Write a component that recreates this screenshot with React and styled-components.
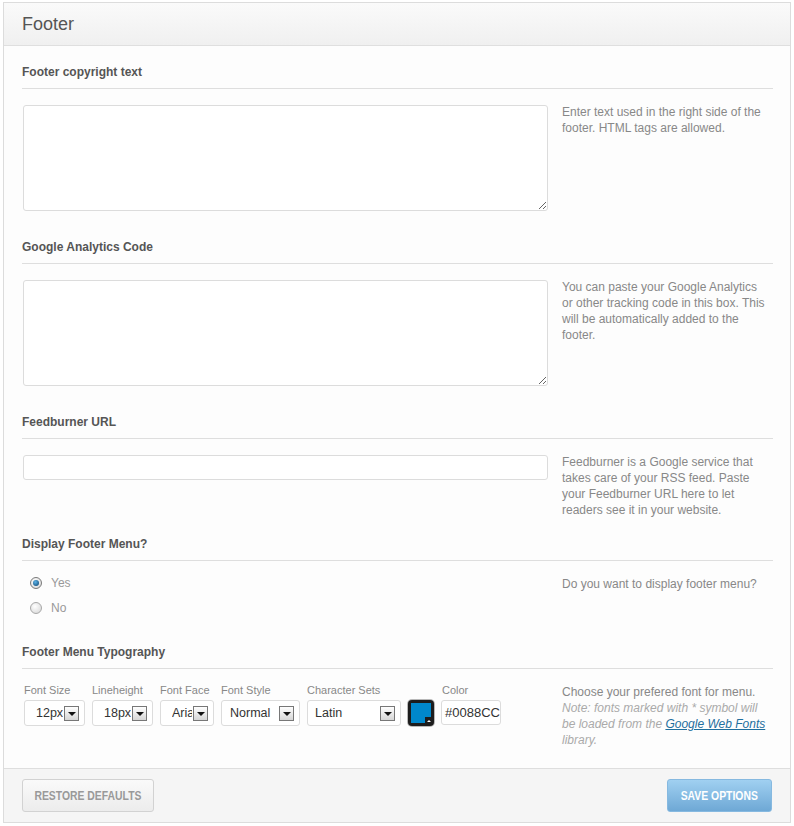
import React from "react";
import styled, { createGlobalStyle } from "styled-components";

const Global = createGlobalStyle`
  * { box-sizing: border-box; }
  html, body { margin: 0; padding: 0; background: #fff; }
  body { font-family: "Liberation Sans", Arial, sans-serif; }
`;

const Page = styled.div`
  padding: 2px 3px 3px 3px;
`;

const Panel = styled.div`
  border: 1px solid #dcdcdc;
  background: #fdfdfd;
`;

const Header = styled.div`
  height: 43px;
  display: flex;
  align-items: center;
  padding: 0 18px;
  background: linear-gradient(#fafafa, #f0f0f0);
  border-bottom: 1px solid #dfdfdf;
`;

const Title = styled.h2`
  margin: 0;
  font-size: 18px;
  font-weight: normal;
  color: #555;
`;

const Body = styled.div`
  padding: 17px 17px 3px 18px;
`;

const Section = styled.section`
  padding-bottom: 18px;
`;

const Heading = styled.h3`
  margin: 0 0 14px 0;
  font-size: 12px;
  line-height: 18px;
  font-weight: bold;
  color: #555;
  padding-bottom: 7px;
  border-bottom: 1px solid #dedede;
`;

const Row = styled.div`
  display: grid;
  grid-template-columns: 526px 207px;
  column-gap: 14px;
  align-items: start;
`;

const Desc = styled.div`
  font-size: 12px;
  line-height: 16px;
  color: #888;
  margin: 1px 0 -1px 0;
`;

const Note = styled.em`
  color: #aaa;
`;

const Link = styled.a`
  color: #1f6f9e;
  text-decoration: underline;
`;

const TextArea = styled.textarea`
  display: block;
  width: 525px;
  height: 106px;
  margin: 2px 0 9px 1px;
  border: 1px solid #dcdcdc;
  border-radius: 3px;
  background: #fff;
  resize: vertical;
  font-family: "Liberation Sans", Arial, sans-serif;
`;

const TextInput = styled.input`
  display: block;
  width: 525px;
  height: 25px;
  margin: 2px 0 0 1px;
  border: 1px solid #dcdcdc;
  border-radius: 3px;
  background: #fff;
`;

const RadioList = styled.div`
  display: flex;
  flex-direction: column;
  gap: 7px;
  margin: -1px 0 8px 8px;
`;

const RadioRow = styled.label`
  display: flex;
  align-items: center;
  gap: 9px;
  font-size: 12px;
  line-height: 18px;
  color: #999;
`;

const RadioDot = styled.span`
  width: 12px;
  height: 12px;
  border-radius: 50%;
  border: 1px solid ${(p) => (p.$checked ? "#7a7a7a" : "#a8a8a8")};
  background: radial-gradient(circle at 40% 35%, #ffffff, #d4d4d4);
  display: flex;
  align-items: center;
  justify-content: center;
  &::after {
    content: "";
    width: 6px;
    height: 6px;
    border-radius: 50%;
    display: ${(p) => (p.$checked ? "block" : "none")};
    background: radial-gradient(circle at 40% 35%, #5bb3e8, #0a3f6b);
  }
`;

const Fields = styled.div`
  display: flex;
  gap: 7px;
  align-items: flex-start;
  padding-left: 2px;
`;

const Field = styled.div`
  display: flex;
  flex-direction: column;
  gap: 3px;
`;

const FieldLabel = styled.span`
  font-size: 11px;
  line-height: 14px;
  height: 14px;
  color: #888;
  padding-left: ${(p) => p.$pad || 0}px;
`;

const SelectBox = styled.div`
  width: ${(p) => p.$w}px;
  height: 26px;
  display: flex;
  align-items: center;
  gap: 1px;
  padding: 0 5px 0 ${(p) => p.$pad}px;
  border: 1px solid #dcdcdc;
  border-radius: 3px;
  background: #fff;
`;

const SelectText = styled.span`
  flex: 1;
  min-width: 0;
  overflow: hidden;
  white-space: nowrap;
  font-size: 12.5px;
  color: #333;
`;

const Arrow = styled.span`
  flex: none;
  width: 15px;
  height: 15px;
  border: 1px solid #777;
  background: linear-gradient(#fefefe, #d6d6d6);
  display: flex;
  align-items: center;
  justify-content: center;
  &::after {
    content: "";
    margin-top: 2px;
    border-left: 4px solid transparent;
    border-right: 4px solid transparent;
    border-top: 4px solid #111;
  }
`;

const Swatch = styled.div`
  position: relative;
  width: 26px;
  height: 26px;
  padding: 3px;
  border-radius: 4px;
  background: #1d1d1d;
  box-shadow: 0 0 0 1px #b8b8b8;
`;

const SwatchColor = styled.div`
  width: 20px;
  height: 20px;
  background: #0088cc;
`;

const SwatchNotch = styled.span`
  position: absolute;
  right: 3px;
  bottom: 3px;
  width: 6px;
  height: 6px;
  background: #1d1d1d;
  display: flex;
  align-items: flex-end;
  justify-content: flex-end;
  &::after {
    content: "";
    border-left: 2px solid transparent;
    border-right: 2px solid transparent;
    border-bottom: 2px solid #fff;
    margin: 0 0 1px 0;
  }
`;

const ColorInput = styled.div`
  width: 60px;
  height: 25px;
  display: flex;
  align-items: center;
  padding-left: 3px;
  border: 1px solid #dcdcdc;
  border-radius: 3px;
  background: #fff;
  overflow: hidden;
  white-space: nowrap;
  font-size: 13px;
  color: #333;
`;

const FooterBar = styled.div`
  display: flex;
  justify-content: space-between;
  align-items: center;
  padding: 10px 18px;
  background: #f5f5f5;
  border-top: 1px solid #dedede;
`;

const Button = styled.button`
  height: 33px;
  width: ${(p) => p.$w}px;
  padding: 0;
  display: flex;
  align-items: center;
  justify-content: center;
  border-radius: 3px;
  cursor: pointer;
  border: 1px solid ${(p) => (p.$primary ? "#86b9e0" : "#d2d2d2")};
  color: ${(p) => (p.$primary ? "#fff" : "#999")};
  background: ${(p) =>
    p.$primary
      ? "linear-gradient(#a0d0f1, #6ea8d5)"
      : "linear-gradient(#fafafa, #ececec)"};
`;

const ButtonLabel = styled.span`
  display: inline-block;
  white-space: nowrap;
  font-family: "Liberation Sans", Arial, sans-serif;
  font-weight: bold;
  font-size: 13px;
  text-transform: uppercase;
  transform: scaleX(0.8);
`;

const selects = [
  { label: "Font Size", value: "12px", w: 61, pad: 11 },
  { label: "Lineheight", value: "18px", w: 61, pad: 11 },
  { label: "Font Face", value: "Arial", w: 54, pad: 11 },
  { label: "Font Style", value: "Normal", w: 79, pad: 8 },
  { label: "Character Sets", value: "Latin", w: 94, pad: 7 },
];

export default function App() {
  return (
    <>
      <Global />
      <Page>
        <Panel>
          <Header>
            <Title>Footer</Title>
          </Header>
          <Body>
            <Section>
              <Heading>Footer copyright text</Heading>
              <Row>
                <TextArea />
                <Desc>Enter text used in the right side of the footer. HTML tags are allowed.</Desc>
              </Row>
            </Section>
            <Section>
              <Heading>Google Analytics Code</Heading>
              <Row>
                <TextArea />
                <Desc>
                  You can paste your Google Analytics or other tracking code in this box. This will be automatically added to the footer.
                </Desc>
              </Row>
            </Section>
            <Section>
              <Heading>Feedburner URL</Heading>
              <Row>
                <TextInput type="text" />
                <Desc>
                  Feedburner is a Google service that takes care of your RSS feed. Paste your Feedburner URL here to let readers see it in your website.
                </Desc>
              </Row>
            </Section>
            <Section>
              <Heading>Display Footer Menu?</Heading>
              <Row>
                <RadioList>
                  <RadioRow>
                    <RadioDot $checked />
                    Yes
                  </RadioRow>
                  <RadioRow>
                    <RadioDot />
                    No
                  </RadioRow>
                </RadioList>
                <Desc>Do you want to display footer menu?</Desc>
              </Row>
            </Section>
            <Section>
              <Heading>Footer Menu Typography</Heading>
              <Row>
                <Fields>
                  {selects.map((s) => (
                    <Field key={s.label}>
                      <FieldLabel>{s.label}</FieldLabel>
                      <SelectBox $w={s.w} $pad={s.pad}>
                        <SelectText>{s.value}</SelectText>
                        <Arrow />
                      </SelectBox>
                    </Field>
                  ))}
                  <Field>
                    <FieldLabel>&nbsp;</FieldLabel>
                    <Swatch>
                      <SwatchColor />
                      <SwatchNotch />
                    </Swatch>
                  </Field>
                  <Field>
                    <FieldLabel $pad={1}>Color</FieldLabel>
                    <ColorInput>#0088CC</ColorInput>
                  </Field>
                </Fields>
                <Desc>
                  Choose your prefered font for menu.{" "}
                  <Note>
                    Note: fonts marked with * symbol will be loaded from the{" "}
                    <Link href="#">Google Web Fonts</Link> library.
                  </Note>
                </Desc>
              </Row>
            </Section>
          </Body>
          <FooterBar>
            <Button $w={132}>
              <ButtonLabel>Restore Defaults</ButtonLabel>
            </Button>
            <Button $w={105} $primary>
              <ButtonLabel>Save Options</ButtonLabel>
            </Button>
          </FooterBar>
        </Panel>
      </Page>
    </>
  );
}
